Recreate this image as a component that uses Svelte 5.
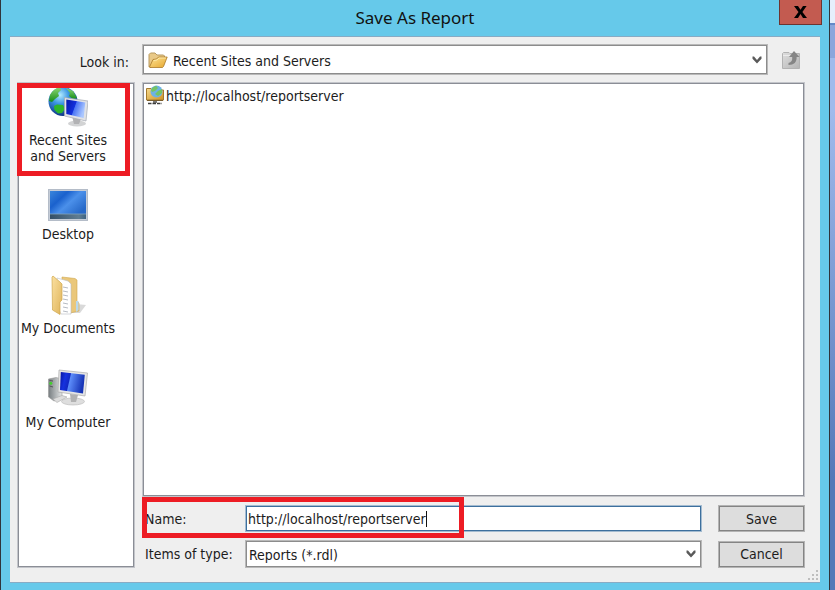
<script>
  const places = [
    { id: 'recent', lines: ['Recent Sites', 'and Servers'], marked: true },
    { id: 'desktop', lines: ['Desktop'] },
    { id: 'documents', lines: ['My Documents'] },
    { id: 'computer', lines: ['My Computer'] }
  ];
  let name = $state('http://localhost/reportserver');
</script>

{#snippet chevron()}
  <svg class="chevron" width="10" height="8" viewBox="0 0 10 8" aria-hidden="true">
    <path d="M0.5 0.5 L2 0.5 L5 4 L8 0.5 L9.5 0.5 L9.5 2.8 L5 7.6 L0.5 2.8Z" fill="#5a5a5a" />
  </svg>
{/snippet}

<div class="screen">
  <div class="dialog" role="dialog" aria-labelledby="title">
    <header>
      <h1 id="title">Save As Report</h1>
      <button class="close" aria-label="Close">
        <svg width="13" height="12" viewBox="0 0 13 12"><path d="M0 0H4L6.5 3.8L9 0H12.6L8.4 6L13 12H9L6.5 8.1L4 12H0L4.5 6Z" fill="#000" /></svg>
      </button>
    </header>

    <div class="client">
      <div class="lookin">
        <label for="lookin">Look in:</label>
        <div class="combo">
          <svg class="folder" width="20" height="16" viewBox="0 0 20 16" aria-hidden="true">
            <defs>
              <linearGradient id="fold" x1="0" y1="0" x2="1" y2="1"><stop stop-color="#ffe69a" /><stop offset="1" stop-color="#e5a52b" /></linearGradient>
            </defs>
            <path d="M1 15V2.5L2.5 1H7L9 3H15.5L16.5 4V8L3 15Z" fill="#e9c987" stroke="#b99a60" />
            <path d="M1.5 15L5 7.5L8.5 7L10.5 5H19.2L15.5 14.5L14.5 15.5H2Z" fill="url(#fold)" stroke="#a97928" stroke-width=".8" />
            <path d="M5.7 8.5L9 8L11 6H17.8" fill="none" stroke="#fff0b8" stroke-width=".8" />
          </svg>
          <select id="lookin" class="with-icon"><option>Recent Sites and Servers</option></select>
          {@render chevron()}
        </div>
        <button class="up" aria-label="Up one level">
          <svg width="20" height="20" viewBox="0 0 20 20">
            <defs><linearGradient id="upg" x1="0" x2="1" y2="1"><stop stop-color="#dedede" /><stop offset="1" stop-color="#b4b4b4" /></linearGradient></defs>
            <path d="M1.5 18.5V3.5L2.5 2.5H8L9 3.5H18.5V18.5Z" fill="url(#upg)" stroke="#b2b2b2" />
            <path d="M2 5.5H11" stroke="#ebebeb" />
            <path d="M13 1L18.5 7H15.6C16 12 13 15 7.5 15V13C10.5 12.3 11.6 10.5 11.2 7H8Z" fill="#858585" />
          </svg>
        </button>
      </div>

      <div class="body">
        <nav>
          {#each places as place}
            <button class="place">
              <svg class="picture" width="40" height="40" viewBox="0 0 40 40" aria-hidden="true">
                {#if place.id === 'recent'}
                  <defs>
                    <radialGradient id="globe" cx=".4" cy=".28" r=".75"><stop stop-color="#b4ecff" /><stop offset=".4" stop-color="#3b96e4" /><stop offset="1" stop-color="#0b2f80" /></radialGradient>
                    <linearGradient id="land" y2="1" x2="0"><stop stop-color="#8ed875" /><stop offset="1" stop-color="#168d19" /></linearGradient>
                    <linearGradient id="screen1" x2="1" y2=".35"><stop stop-color="#0718a8" /><stop offset=".5" stop-color="#1230dc" /><stop offset=".54" stop-color="#4a74f4" /><stop offset="1" stop-color="#a9c6ff" /></linearGradient>
                  </defs>
                  <circle cx="15" cy="14.5" r="14.5" fill="url(#globe)" />
                  <path d="M2 8C5 3 8 1 12 0L13 3L10 6L11 9L7 12L4 15L1 14Z" fill="url(#land)" />
                  <path d="M18 1L25 4L29 11L25 12L21 9L22 6Z" fill="url(#land)" />
                  <path d="M6 19L9 17.5L15 18L17 22L14 26L10 26.5L6.5 23Z" fill="#2db62b" />
                  <ellipse cx="29" cy="36.5" rx="9" ry="3" fill="#d2d3d4" />
                  <path d="M24 29L33 32L31 37H26Z" fill="#b2b2b4" />
                  <path d="M16.5 10.5L40 14L38 34L16.5 29Z" fill="#e0e2e6" stroke="#a5a9b2" stroke-width=".7" />
                  <path d="M18.3 12.6L37.3 15.5L35.6 31L18.3 27Z" fill="url(#screen1)" />
                {:else if place.id === 'desktop'}
                  <defs>
                    <linearGradient id="desk" x2="1" y2=".7"><stop stop-color="#3a86dc" /><stop offset=".35" stop-color="#1a61cd" /><stop offset=".6" stop-color="#4b90ea" /><stop offset="1" stop-color="#2668c8" /></linearGradient>
                    <linearGradient id="bar" x2="1"><stop stop-color="#344f67" /><stop offset=".8" stop-color="#607d92" /><stop offset="1" stop-color="#3d6382" /></linearGradient>
                  </defs>
                  <rect x=".5" y="8.5" width="39" height="31" fill="#c5ccd7" stroke="#b4bcc8" />
                  <rect x="2" y="10" width="36" height="23" fill="url(#desk)" />
                  <rect x="2" y="33" width="36" height="5" fill="url(#bar)" />
                  <path d="M2 33H38" stroke="#83a5bd" stroke-width=".8" />
                {:else if place.id === 'documents'}
                  <defs>
                    <linearGradient id="doc" x2="1" y2="1"><stop stop-color="#fbe0a0" /><stop offset="1" stop-color="#dfb45a" /></linearGradient>
                  </defs>
                  <path d="M28 29L38 30L32 38H20Z" fill="#c9c9c9" opacity=".7" />
                  <path d="M14 2L27 3.5L29 5V26L31 28V36L22 38L14 34Z" fill="#eac77a" stroke="#d0a84e" stroke-width=".6" />
                  <path d="M9 3L20 6L23 9V39L13 39L9 31Z" fill="#fff" stroke="#b9bdc5" stroke-width=".6" />
                  <path d="M15 12L20 13M15 16L20 17M15 20L20 21M15 24L20 25M15 28L20 29M15 32L20 33M15 36L20 37" stroke="#aeb3bc" stroke-width=".9" />
                  <path d="M5 1L12 7L14 9V25L12 27V39.5L4.5 35L4 2Z" fill="url(#doc)" stroke="#d0a84e" stroke-width=".7" />
                  <path d="M28 26H30.5V35L28 37Z" fill="#b9d8ea" />
                {:else}
                  <defs>
                    <linearGradient id="screen2" x2="1" y2=".2"><stop stop-color="#06129b" /><stop offset=".25" stop-color="#1632df" /><stop offset=".42" stop-color="#1229c4" /><stop offset=".46" stop-color="#5d8dfa" /><stop offset="1" stop-color="#1633b6" /></linearGradient>
                    <linearGradient id="tower" x2="1"><stop stop-color="#777d80" /><stop offset="1" stop-color="#e3e5e6" /></linearGradient>
                  </defs>
                  <path d="M.5 10L8 8.5L14 10V30L6 32L.5 28Z" fill="url(#tower)" stroke="#999" stroke-width=".6" />
                  <path d="M1.5 11.5L5 12M1.5 17L5 18" stroke="#555" />
                  <circle cx="2.8" cy="14.3" r="1.5" fill="#42d02c" />
                  <path d="M5 30L14 26.5L19 28L9 33.5Z" fill="#ddd" stroke="#aaa" stroke-width=".6" />
                  <ellipse cx="25" cy="32.5" rx="11.5" ry="3.5" fill="#dedede" stroke="#b6b6b6" stroke-width=".6" />
                  <path d="M22 25L30 26L28 33H23Z" fill="#b2b2b2" />
                  <path d="M11 1L39.5 4L37 27L10 23Z" fill="#e5e5e5" stroke="#acacac" stroke-width=".7" />
                  <path d="M12.8 3L36.8 5.7L35 24.6L12 21Z" fill="url(#screen2)" />
                {/if}
              </svg>
              <span>{#each place.lines as line}<span class="line">{line}</span>{/each}</span>
            </button>
            {#if place.marked}<div class="mark mark-place"></div>{/if}
          {/each}
        </nav>

        <div class="main">
          <div class="list">
            <a href="#server">
              <svg width="20" height="20" viewBox="0 0 20 20" aria-hidden="true">
                <defs><linearGradient id="site" x2="1" y2="1"><stop stop-color="#f6d98c" /><stop offset="1" stop-color="#cf9426" /></linearGradient></defs>
                <path d="M1.5 15V3.5H6L7 5H18.5V15Z" fill="url(#site)" stroke="#a47a2c" />
                <circle cx="11.5" cy="6.5" r="6" fill="#6db2e4" />
                <path d="M7 3L11 .7L13 3L10 6L7 7L6 5ZM13 6L17 4V8L13 11L10 9Z" fill="#74c465" />
                <path d="M2 15.5H18" stroke="#7a5c2a" />
                <path d="M8 16H12V18H8Z" fill="#777" />
                <path d="M3 18.5H17" stroke="#3c3c3c" stroke-width="1.6" stroke-dasharray="3.5 1" />
              </svg>
              <span>http://localhost/reportserver</span>
            </a>
          </div>

          <div class="row">
            <label for="name">Name:</label>
            <input id="name" type="text" bind:value={name} />
            <span class="caret" aria-hidden="true"><span>{name}</span></span>
            <button class="action">Save</button>
            <div class="mark mark-name"></div>
          </div>
          <div class="row">
            <label for="type">Items of type:</label>
            <div class="combo">
              <select id="type"><option>Reports (*.rdl)</option></select>
              {@render chevron()}
            </div>
            <button class="action">Cancel</button>
          </div>
        </div>
      </div>
      <svg class="grip" width="10" height="10" viewBox="0 0 10 10" aria-hidden="true">
        <path d="M8 0h2v2h-2zM4 4h2v2h-2zM8 4h2v2h-2zM0 8h2v2h-2zM4 8h2v2h-2zM8 8h2v2h-2z" fill="#bebebe" />
      </svg>
    </div>
  </div>
  <div class="behind"></div>
</div>

<style>
  :global(body) { margin: 0; }
  .screen {
    display: flex;
    min-height: 100vh;
    font: 14px/16px "DejaVu Sans Condensed", Tahoma, sans-serif;
    color: #1c1c1c;
  }
  .screen * { box-sizing: border-box; }
  button, input, select { font: inherit; color: inherit; margin: 0; border-radius: 0; }
  button { padding: 0; }
  .dialog {
    flex: 1;
    display: flex;
    flex-direction: column;
    padding: 0 9px 7px;
    background: #66c9ea;
    border: solid #30353c;
    border-width: 0 1px;
  }
  .behind {
    width: 5px;
    background: linear-gradient(#e6effc 0 23px, #6489c8 23px 25px, #8ba6dc 25px 58px, #a0bbec 58px 110px, #5478b8 480px);
  }
  header { position: relative; height: 36px; display: flex; justify-content: center; align-items: center; }
  h1 { margin: 0; font: 17px/24px "Noto Sans", "Open Sans", sans-serif; color: #111; }
  .close {
    position: absolute;
    top: 0;
    right: -2px;
    width: 43px;
    height: 25px;
    display: grid;
    place-items: center;
    background: #c35b50;
    border: 1px solid #6d3430;
    border-top: 0;
  }
  .client {
    position: relative;
    flex: 1;
    display: flex;
    flex-direction: column;
    gap: 7px;
    padding: 7px 15px 14px 7px;
    background: #efefef;
    border: solid #88abc4;
    border-width: 1px 0;
  }
  .lookin { display: flex; align-items: center; }
  .lookin label { width: 125px; padding: 4px 13px 0 0; text-align: right; }
  .lookin .combo { height: 31px; }
  .combo { position: relative; flex: 1; height: 28px; }
  select {
    appearance: none;
    width: 100%;
    height: 100%;
    padding: 2px 24px 0 3px;
    background: #fff;
    border: 1px solid #b9b9b9;
    box-shadow: inset 0 0 0 1px #8c8c8c;
  }
  .with-icon { padding-left: 30px; }
  .folder { position: absolute; left: 6px; top: 8px; }
  .chevron { position: absolute; right: 6px; top: 0; bottom: 0; margin: auto 0; pointer-events: none; }
  .up { width: 20px; height: 20px; margin: 0 4px 0 13px; background: none; border: 0; }
  .up svg { display: block; }
  .body { flex: 1; display: flex; gap: 7px; }
  nav, .list { background: #fff; border: 1px solid #c3c5ca; box-shadow: inset 0 0 0 1px #8b8e96; }
  nav { position: relative; width: 118px; padding: 1px 16px 0 0; }
  .place {
    display: flex;
    flex-direction: column;
    align-items: center;
    gap: 5px;
    width: 100%;
    height: 94px;
    padding: 3px 0 0;
    background: none;
    border: 0;
  }
  .picture { display: block; flex: none; }
  .line { display: block; white-space: nowrap; }
  .mark { position: absolute; border: 5px solid #ed1c24; pointer-events: none; }
  .mark-place { left: -1px; top: 0; width: 113px; height: 93px; }
  .main { flex: 1; display: flex; flex-direction: column; gap: 8px; }
  .list { flex: 1; padding: 2px; }
  .list a { display: inline-flex; align-items: center; padding: 0; color: inherit; text-decoration: none; }
  .list span { padding-top: 2px; margin-left: 1px; }
  .row { position: relative; display: flex; align-items: center; }
  .row label { width: 103px; padding-left: 3px; }
  .row input {
    flex: 1;
    min-width: 0;
    height: 27px;
    padding: 0 2px;
    background: #fff;
    border: 1px solid #a3bbd0;
    box-shadow: inset 0 0 0 1px #3d709e;
    outline: 0;
  }
  .action { width: 87px; height: 27px; margin-left: 16px; background: #ddd; border: 1px solid #b4b4b4; box-shadow: inset 0 0 0 1px #848484; }
  .caret { position: absolute; left: 106px; color: transparent; border-right: 1px solid #111; pointer-events: none; user-select: none; }
  .mark-name { left: 0; top: -8px; width: 322px; height: 41px; }
  .grip { position: absolute; right: 2px; bottom: 2px; }
</style>
